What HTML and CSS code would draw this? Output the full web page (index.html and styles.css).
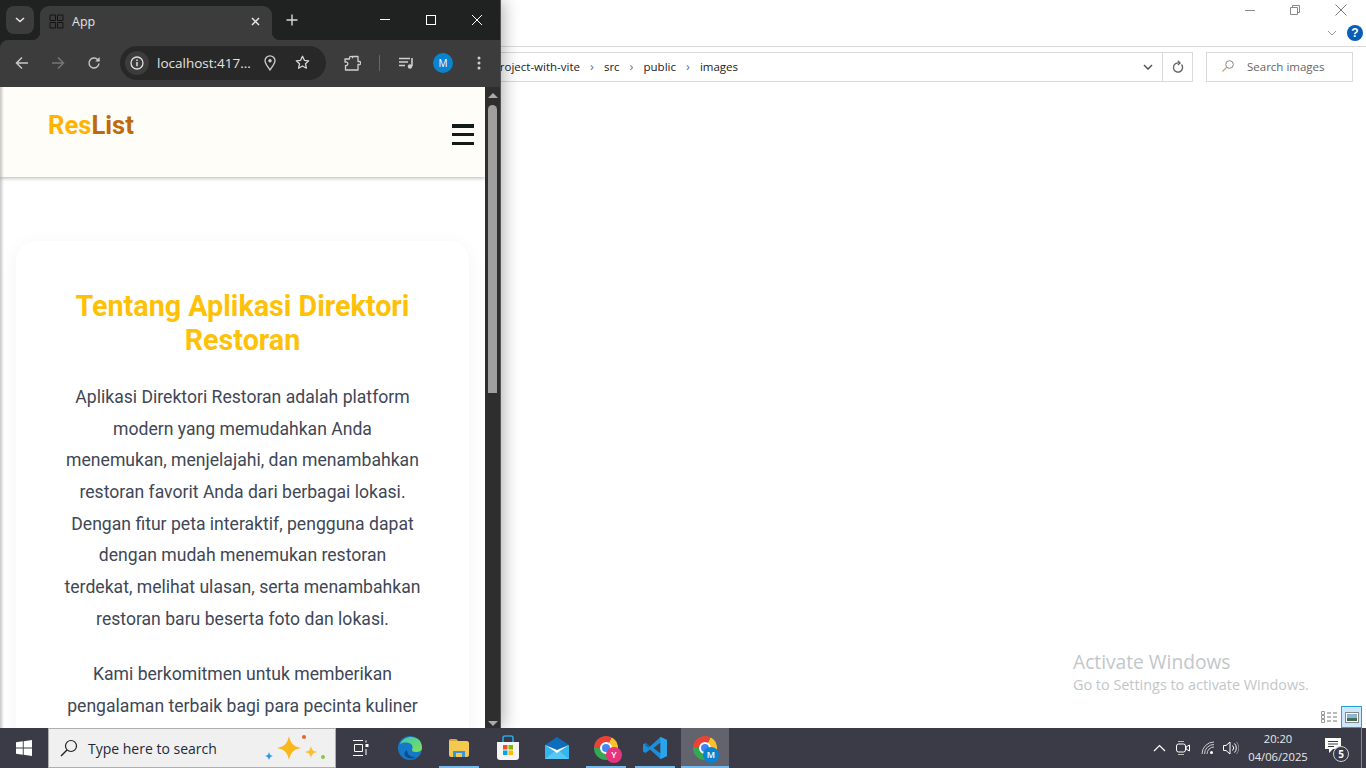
FILE: index.html
```html
<!DOCTYPE html>
<html lang="id">
<head>
    <meta charset="UTF-8">
    <title>App</title>
    <link rel="stylesheet" href="styles.css">
</head>
<body>
<div class="desktop">
    <!-- file explorer behind the browser -->
    <div class="explorer">
        <div class="ex-top">
            <div class="ex-controls">
                <svg width="12" height="12" viewBox="0 0 12 12"><path d="M1 6.500h10" stroke="#8a8a8a" fill="none"/></svg>
                <svg width="12" height="12" viewBox="0 0 12 12"><path d="M1.500 3.500h7v7h-7zM3.500 3.500v-2h7v7h-2" stroke="#8a8a8a" fill="none"/></svg>
                <svg width="14" height="14" viewBox="0 0 14 14"><path d="M1.500 1.500l11 11M12.500 1.500l-11 11" stroke="#7a7a7a" fill="none"/></svg>
            </div>
            <div class="ex-ribbon">
                <svg width="10" height="6" viewBox="0 0 10 6"><path d="M1 1l4 4 4-4" stroke="#999" fill="none"/></svg>
                <span class="help">?</span>
            </div>
        </div>
        <div class="ex-bar">
            <div class="address">
                <div class="crumbs">
                    <span>project-with-vite</span><i>›</i><span>src</span><i>›</i><span>public</span><i>›</i><span>images</span>
                </div>
                <div class="addr-drop"><svg width="10" height="6" viewBox="0 0 10 6"><path d="M1 1l4 4 4-4" stroke="#555" stroke-width="1.500" fill="none"/></svg></div>
                <div class="addr-refresh"><svg width="14" height="14" viewBox="0 0 14 14"><path d="M10.500 4.500a4.600 4.600 0 1 1-3.500-1.600H9" stroke="#666" stroke-width="1.400" fill="none"/><path d="M6.800 0.800l2.400 2.100-2.400 2.100" stroke="#666" stroke-width="1.200" fill="none"/></svg></div>
            </div>
            <div class="ex-search">
                <svg width="14" height="14" viewBox="0 0 14 14"><circle cx="8.500" cy="5.500" r="3.800" stroke="#888" fill="none"/><path d="M5.800 8.200L1.500 12.500" stroke="#c9a15c" stroke-width="1.200"/></svg>
                <span>Search images</span>
            </div>
        </div>
        <div class="ex-body">
            <div class="activate">
                <div class="activate-title">Activate Windows</div>
                <div class="activate-sub">Go to Settings to activate Windows.</div>
            </div>
            <div class="view-btns">
                <span class="view-btn">
                    <svg width="18" height="14" viewBox="0 0 18 14"><path d="M1.500 1.500h3v3h-3zM1.500 5.500h3v3h-3zM1.500 9.500h3v3h-3z" stroke="#999" fill="#fff"/><path d="M7 3h4M13 3h4M7 7h4M13 7h4M7 11h4M13 11h4" stroke="#777"/></svg>
                </span>
                <span class="view-btn view-on">
                    <svg width="14" height="11" viewBox="0 0 14 11"><rect x=".5" y=".5" width="13" height="10" fill="#fff" stroke="#888"/><rect x="2" y="2" width="10" height="7" fill="#8fb6d6"/><rect x="2" y="6" width="10" height="3" fill="#3f6f55"/></svg>
                </span>
            </div>
        </div>
    </div>

    <!-- browser window -->
    <div class="browser">
        <div class="tabstrip">
            <span class="tab-search"><svg width="10" height="6" viewBox="0 0 10 6"><path d="M1 1l4 3.500L9 1" stroke="#e3e3e3" stroke-width="1.600" fill="none"/></svg></span>
            <div class="tab">
                <svg width="15" height="15" viewBox="0 0 15 15"><path d="M1 1h5.500v5.500H1zM8.500 1H14v5.500H8.500zM1 8.500h5.500V14H1zM8.500 8.500H14V14H8.500z" stroke="#141414" fill="none" stroke-linejoin="round"/></svg>
                <span class="tab-title">App</span>
                <svg class="tab-close" width="9" height="9" viewBox="0 0 9 9"><path d="M1 1l7 7M8 1L1 8" stroke="#e6e6e6" stroke-width="1.500"/></svg>
            </div>
            <svg class="new-tab" width="12" height="12" viewBox="0 0 12 12"><path d="M6 .5v11M.5 6h11" stroke="#d8d8d8" stroke-width="1.400"/></svg>
            <div class="win-controls">
                <svg width="12" height="12" viewBox="0 0 12 12"><path d="M1 5.500h10" stroke="#fff" stroke-width="1"/></svg>
                <svg width="12" height="12" viewBox="0 0 12 12"><rect x="1.500" y="1.500" width="9" height="9" stroke="#fff" fill="none"/></svg>
                <svg width="12" height="12" viewBox="0 0 12 12"><path d="M1 1l10 10M11 1L1 11" stroke="#fff"/></svg>
            </div>
        </div>
        <div class="toolbar">
            <svg class="tb-back" width="14" height="14" viewBox="0 0 14 14"><path d="M13 7H2M7 1.500L1.500 7 7 12.500" stroke="#c8c8c8" stroke-width="1.500" fill="none"/></svg>
            <svg class="tb-forward" width="14" height="14" viewBox="0 0 14 14"><path d="M1 7h11M7 1.500L12.500 7 7 12.500" stroke="#767676" stroke-width="1.500" fill="none"/></svg>
            <svg class="tb-reload" width="14" height="14" viewBox="0 0 14 14"><path d="M12 7.500a5 5 0 1 1-1.400-4L12.300 5" stroke="#c8c8c8" stroke-width="1.400" fill="none"/><path d="M12.600 1v4.400H8.200" fill="#c8c8c8"/></svg>
            <div class="omnibox">
                <span class="site-info"><svg width="14" height="14" viewBox="0 0 14 14"><circle cx="7" cy="7" r="6" stroke="#ddd" stroke-width="1.300" fill="none"/><path d="M7 6v4.200M7 3.600v1.400" stroke="#ddd" stroke-width="1.500"/></svg></span>
                <span class="url">localhost:417...</span>
                <svg class="omni-pin" width="12" height="16" viewBox="0 0 12 16"><path d="M6 15C3.500 11 1 8.600 1 5.800a5 5 0 0 1 10 0C11 8.600 8.500 11 6 15z" stroke="#d0d0d0" stroke-width="1.300" fill="none"/><circle cx="6" cy="5.800" r="1.700" fill="#d0d0d0"/></svg>
                <svg class="omni-star" width="15" height="15" viewBox="0 0 15 15"><path d="M7.500 1.300l1.900 4 4.300.5-3.200 3 .9 4.400-3.900-2.200-3.900 2.200.9-4.400-3.200-3 4.300-.5z" stroke="#d8d8d8" stroke-width="1.300" fill="none" stroke-linejoin="round"/></svg>
            </div>
            <svg class="tb-ext" width="17" height="16" viewBox="0 0 17 16"><path d="M1 4h4.500V2.800a1.500 1.500 0 0 1 3 0V1.500H14v5h1.300a1.500 1.500 0 0 1 0 3H14V15H1.500v-4.500a1.500 1.500 0 0 0 1-3.500H1z" stroke="#cfcfcf" stroke-width="1.300" fill="none" stroke-linejoin="round"/></svg>
            <span class="tb-sep"></span>
            <svg class="tb-media" width="16" height="12" viewBox="0 0 16 12"><path d="M0 1.500h11M0 5h9M0 8.500h6" stroke="#cfcfcf" stroke-width="1.500"/><path d="M13 1v8" stroke="#cfcfcf" stroke-width="1.600"/><circle cx="11" cy="9.500" r="2.200" fill="#cfcfcf"/></svg>
            <span class="avatar">M</span>
            <svg class="tb-menu" width="4" height="14" viewBox="0 0 4 14"><circle cx="2" cy="2" r="1.500" fill="#cfcfcf"/><circle cx="2" cy="7" r="1.500" fill="#cfcfcf"/><circle cx="2" cy="12" r="1.500" fill="#cfcfcf"/></svg>
        </div>
        <div class="viewport">
            <div class="page">
                <header class="site-header">
                    <a class="logo"><span class="logo-res">Res</span><span class="logo-list">List</span></a>
                    <button class="burger"><span></span><span></span><span></span></button>
                </header>
                <main class="about">
                    <section class="about-card">
                        <h2>Tentang Aplikasi Direktori Restoran</h2>
                        <p>Aplikasi Direktori Restoran adalah platform modern yang memudahkan Anda menemukan, menjelajahi, dan menambahkan restoran favorit Anda dari berbagai lokasi. Dengan fitur peta interaktif, pengguna dapat dengan mudah menemukan restoran terdekat, melihat ulasan, serta menambahkan restoran baru beserta foto dan lokasi.</p>
                        <p>Kami berkomitmen untuk memberikan pengalaman terbaik bagi para pecinta kuliner</p>
                    </section>
                </main>
            </div>
            <div class="scrollbar">
                <span class="sb-up"></span>
                <span class="sb-thumb"></span>
                <span class="sb-down"></span>
            </div>
        </div>
    </div>

    <!-- windows taskbar -->
    <div class="taskbar">
        <div class="start">
            <svg width="16" height="16" viewBox="0 0 16 16"><path d="M0 2.300L6.800 1.300V7.500H0zM7.700 1.200L16 0V7.500H7.700zM0 8.400H6.800V14.700L0 13.700zM7.700 8.400H16V16L7.700 14.800z" fill="#fff"/></svg>
        </div>
        <div class="search">
            <svg width="18" height="18" viewBox="0 0 18 18"><circle cx="11" cy="7" r="5.500" stroke="#222" stroke-width="1.200" fill="none"/><path d="M7 11l-6 6" stroke="#222" stroke-width="1.400"/></svg>
            <span class="search-text">Type here to search</span>
            <svg class="sparkles" width="62" height="30" viewBox="0 0 62 30"><path d="M25 3c2 8 4 10 12 12-8 2-10 4-12 12-2-8-4-10-12-12 8-2 10-4 12-12z" fill="#fbb81d"/><path d="M47 13c1 4 2 5 6 6-4 1-5 2-6 6-1-4-2-5-6-6 4-1 5-2 6-6z" fill="#fbc02d"/><path d="M5 19c.8 3 1.500 3.500 4 4-2.500.8-3.200 1.500-4 4-.8-2.500-1.500-3.200-4-4 2.500-.5 3.200-1 4-4z" fill="#2e9be6"/><circle cx="40" cy="4" r="2" fill="#e8622c"/><circle cx="59" cy="24" r="2" fill="#8cc63f"/></svg>
        </div>
        <div class="task-item">
            <svg width="16" height="16" viewBox="0 0 16 16"><path d="M0 .5h10M0 15.500h10M1.500 4.500h8v7h-8z" stroke="#fff" fill="none"/><path d="M12.500 4h3v3h-3z" fill="#fff"/><path d="M13 .5v2M13 9v6" stroke="#fff"/></svg>
        </div>
        <div class="task-item">
            <svg width="24" height="24" viewBox="0 0 24 24"><defs><linearGradient id="edgeA" x1="0" y1="0" x2="1" y2="1"><stop offset="0" stop-color="#3bc9b0"/><stop offset="1" stop-color="#7fe05a"/></linearGradient></defs><circle cx="12" cy="12" r="12" fill="#1479c9"/><path d="M2 8C5 1 14-1 20 3c3 2 4 6 4 9 0 3-3 4-6 4-3 0-4-1-4-2 1-2 1-6-3-7-4-1-7 0-9 1z" fill="url(#edgeA)"/><path d="M9 14c0 4 3 7 7 7 1 0 2 0 3-1-3 3-8 3-11 1-2-2-2-5 1-7z" fill="#0c4d8a"/></svg>
        </div>
        <div class="task-item running">
            <svg width="22" height="20" viewBox="0 0 22 20"><path d="M1 3c0-1 1-2 2-2h5l2 2h9c1 0 2 1 2 2v12c0 1-1 2-2 2H3c-1 0-2-1-2-2z" fill="#f3c94f"/><path d="M1 3c0-1 1-2 2-2h5l2 2H1z" fill="#d9a92f"/><path d="M5 13h12v6H5z" fill="#3c93d6"/><path d="M8 15h6v4H8z" fill="#f3c94f"/></svg>
        </div>
        <div class="task-item">
            <svg width="24" height="26" viewBox="0 0 24 26"><path d="M7 7V3c0-1 1-2 2-2h6c1 0 2 1 2 2v4" stroke="#2aa7e0" stroke-width="1.600" fill="none"/><path d="M1 7h22v15c0 2-1 3-3 3H4c-2 0-3-1-3-3z" fill="#f4f4f4"/><path d="M7 10h4.500v4.500H7z" fill="#f25022"/><path d="M12.500 10H17v4.500h-4.500z" fill="#7fba00"/><path d="M7 15.500h4.500V20H7z" fill="#00a4ef"/><path d="M12.500 15.500H17V20h-4.500z" fill="#ffb900"/></svg>
        </div>
        <div class="task-item">
            <svg width="24" height="22" viewBox="0 0 24 22"><path d="M0 8L12 0l12 8v14H0z" fill="#0f6cbd"/><path d="M0 8l12 8 12-8v14H0z" fill="#33b5ee"/><path d="M0 22l10-8 2 1.500 2-1.500 10 8z" fill="#57c8f5"/><path d="M0 8l12 8 12-8-12 5z" fill="#fff"/></svg>
        </div>
        <div class="task-item running">
            <span class="chrome"><span class="chrome-dot"></span></span>
            <span class="badge badge-y">Y</span>
        </div>
        <div class="task-item running">
            <svg width="24" height="24" viewBox="0 0 24 24"><path d="M17.500 1L24 4v16l-6.500 3L7 13.500 2.500 17 0 15.500V8.500L2.500 7 7 10.500z" fill="#1c8fdc"/><path d="M17.500 6.500L10.500 12l7 5.500z" fill="#3b4048"/><path d="M17.500 1L24 4v16l-6.500 3z" fill="#2aa5ec"/><path d="M2.500 7l4.500 3.500-1.500 1.500-3-2.300z" fill="#0c6cb4"/></svg>
        </div>
        <div class="task-item running active">
            <span class="chrome"><span class="chrome-dot"></span></span>
            <span class="badge badge-m">M</span>
        </div>
        <div class="tray">
            <svg class="tray-up" width="13" height="8" viewBox="0 0 13 8"><path d="M1 7l5.500-5.500L12 7" stroke="#fff" stroke-width="1.200" fill="none"/></svg>
            <svg class="tray-meet" width="14" height="16" viewBox="0 0 14 16"><rect x=".5" y="4" width="9" height="8" rx="2" stroke="#fff" fill="none"/><path d="M10 7l3.500-2v6L10 9z" stroke="#fff" fill="none"/><path d="M2 1.500h6M2 14.500h6" stroke="#bbb"/></svg>
            <svg class="tray-net" width="14" height="14" viewBox="0 0 14 14"><path d="M1 13a12 12 0 0 1 12-12M3.500 13A9.500 9.500 0 0 1 13 3.500M6 13a7 7 0 0 1 7-7" stroke="#cfcfcf" fill="none"/><circle cx="10.500" cy="11.500" r="1.500" fill="#fff"/></svg>
            <svg class="tray-vol" width="16" height="14" viewBox="0 0 16 14"><path d="M.5 4.500H3L7 1v12L3 9.500H.5z" stroke="#fff" fill="none"/><path d="M9.500 4.500a3.500 3.500 0 0 1 0 5M11.500 2.500a6.500 6.500 0 0 1 0 9" stroke="#fff" fill="none"/><path d="M13.500 1a9 9 0 0 1 0 12" stroke="#888" fill="none"/></svg>
            <div class="clock"><span>20:20</span><span>04/06/2025</span></div>
            <div class="notify">
                <svg width="16" height="15" viewBox="0 0 16 15"><path d="M0 0h16v11H8l-4 4v-4H0z" fill="#fff"/><path d="M3 3.500h10M3 6h10M3 8.500h6" stroke="#3a3a45"/></svg>
                <span class="notify-count">5</span>
            </div>
        </div>
    </div>
</div>
</body>
</html>
```

FILE: styles.css
```css
* { box-sizing: border-box; }
html, body { margin: 0; padding: 0; height: 100%; overflow: hidden; }
body { font-family: "Open Sans", "Noto Sans", sans-serif; background: #fff; }
svg { display: block; flex: none; }

.desktop { position: relative; width: 1366px; height: 768px; display: flex; flex-direction: column; overflow: hidden; }

/* explorer */
.explorer { flex: 1; display: flex; flex-direction: column; background: #fff; min-height: 0; }
.ex-top { height: 47px; border-bottom: 1px solid #dadada; display: flex; flex-direction: column; }
.ex-controls { display: flex; justify-content: flex-end; align-items: center; gap: 33px; height: 20px; padding-right: 18px; }
.ex-ribbon { display: flex; justify-content: flex-end; align-items: center; gap: 10px; height: 26px; padding-right: 3px; }
.help { width: 16px; height: 16px; border-radius: 50%; background: #0a5db5; color: #fff; font: bold 12px/16px "Liberation Sans", sans-serif; text-align: center; }
.ex-bar { display: flex; align-items: stretch; height: 30px; margin-top: 5px; padding-right: 13px; }
.address { flex: 1; margin-right: 13px; border: 1px solid #d9d9d9; display: flex; align-items: stretch; }
.crumbs { flex: 1; display: flex; align-items: center; justify-content: flex-end; gap: 10px; padding: 0 396px 2px 0; font-size: 11.500px; color: #222; }
.crumbs i { font-style: normal; color: #777; font-size: 13px; }
.addr-drop { width: 28px; display: flex; align-items: center; justify-content: center; }
.addr-refresh { width: 30px; border-left: 1px solid #d9d9d9; display: flex; align-items: center; justify-content: center; }
.ex-search { width: 147px; border: 1px solid #d9d9d9; display: flex; align-items: center; gap: 12px; padding: 0 0 2px 14px; font-size: 11.500px; color: #666; }
.ex-body { flex: 1; position: relative; }
.activate { position: absolute; left: 1073px; top: 567px; color: #c2c6ca; }
.activate-title { font-size: 19.200px; line-height: 26px; }
.activate-sub { font-size: 14.400px; line-height: 20px; }
.view-btns { position: absolute; right: 4px; bottom: 0; display: flex; gap: 3px; }
.view-btn { width: 19px; height: 22px; display: flex; align-items: center; justify-content: center; }
.view-on { width: 21px; background: #cce8ff; border: 1px solid #26a0da; }

/* browser */
.browser { position: absolute; left: 0; top: 0; width: 501px; height: 728px; display: flex; flex-direction: column; border-right: 1px solid #555; box-shadow: 2px 0 16px rgba(0, 0, 0, .32); background: #202221; }
.tabstrip { height: 40px; background: #202221; display: flex; align-items: flex-start; padding: 6px 0 0 6px; position: relative; }
.tab-search { width: 28px; height: 28px; border-radius: 8px; background: #3c3c3c; display: flex; align-items: center; justify-content: center; }
.tab { width: 232px; height: 34px; margin-left: 6px; background: #3c3c3c; border-radius: 9px 9px 0 0; display: flex; align-items: center; padding: 0 12px 4px 9px; color: #e3e3e3; font-size: 12.500px; position: relative; }
.tab::before, .tab::after { content: ""; position: absolute; bottom: 0; width: 8px; height: 8px; }
.tab::before { left: -8px; background: radial-gradient(circle at 0 0, transparent 8px, #3c3c3c 8.500px); }
.tab::after { right: -8px; background: radial-gradient(circle at 100% 0, transparent 8px, #3c3c3c 8.500px); }
.tab-title { flex: 1; margin-left: 8px; }
.new-tab { margin: 8px 0 0 14px; }
.win-controls { margin-left: auto; display: flex; gap: 34px; padding: 8px 17px 0 0; }
.toolbar { height: 47px; background: #3c3c3c; border-radius: 8px 0 0 0; display: flex; align-items: center; padding: 0 0 2px 15px; }
.tb-forward { margin-left: 22px; }
.tb-reload { margin-left: 22px; }
.omnibox { width: 206px; height: 34px; margin-left: 19px; border-radius: 17px; background: #282828; display: flex; align-items: center; padding-left: 5px; }
.site-info { width: 24px; height: 24px; border-radius: 50%; background: #3c3c3c; display: flex; align-items: center; justify-content: center; }
.url { width: 104px; margin-left: 8px; font-size: 13.500px; color: #e3e3e3; white-space: nowrap; }
.omni-pin { margin-left: 3px; }
.omni-star { margin-left: 19px; }
.tb-ext { margin-left: 18px; }
.tb-sep { width: 1px; height: 16px; background: #666; margin-left: 18px; }
.tb-media { margin-left: 19px; }
.avatar { width: 20px; height: 20px; margin-left: 18px; border-radius: 50%; background: #0a84d0; color: #fff; font-size: 10px; line-height: 20px; text-align: center; }
.tb-menu { margin-left: 24px; }

.viewport { flex: 1; display: flex; min-height: 0; position: relative; background: #fff; }
.viewport::after { content: ""; position: absolute; left: 0; top: 0; bottom: 0; width: 4px; background: linear-gradient(to right, rgba(0, 0, 0, .22), rgba(0, 0, 0, 0)); }
.page { width: 485px; overflow: hidden; font-family: Roboto, sans-serif; }
.site-header { height: 90px; background: #fffdf8; box-shadow: 0 1px 4px rgba(0, 0, 0, .3); display: flex; justify-content: space-between; padding: 21px 11px 0 48px; position: relative; }
.logo { font-size: 25.600px; line-height: 34px; font-weight: 700; }
.logo-res { color: #ffb300; }
.logo-list { color: #bf6a0a; }
.burger { width: 22px; height: 21px; margin-top: 16px; padding: 0; border: 0; background: none; display: flex; flex-direction: column; justify-content: space-between; }
.burger span { display: block; height: 3.500px; background: #131b18; }
.about { padding: 64px 16px 0; }
.about-card { background: #fff; border-radius: 20px; padding: 48px; box-shadow: 0 4px 20px rgba(0, 0, 0, .05); text-align: center; }
.about-card h2 { margin: 0 0 25px; font-size: 28.700px; line-height: 34px; font-weight: 700; color: #ffc107; }
.about-card p { margin: 0 0 24px; font-size: 17.600px; line-height: 1.800; color: #404756; }

.scrollbar { width: 15px; background: #2e2e2e; display: flex; flex-direction: column; align-items: center; position: relative; }
.sb-up { width: 0; height: 0; margin-top: 6px; border: 5px solid transparent; border-top: 0; border-bottom: 5px solid #aaa; }
.sb-thumb { width: 9px; height: 288px; margin-top: 7px; border-radius: 5px 5px 0 0; background: #9f9f9f; }
.sb-down { width: 0; height: 0; margin-top: auto; margin-bottom: 2px; border: 5px solid transparent; border-bottom: 0; border-top: 5px solid #aaa; }

/* taskbar */
.taskbar { height: 40px; flex: none; background: #3a3b47; display: flex; align-items: stretch; position: relative; }
.start { width: 48px; display: flex; align-items: center; justify-content: center; }
.search { width: 288px; background: #f0f0f0; border: 1px solid #aeaeae; display: flex; align-items: center; padding-left: 11px; color: #1c2a3a; }
.search-text { margin-left: 10px; font-size: 14px; white-space: nowrap; }
.sparkles { margin-left: auto; margin-right: 9px; }
.task-item { width: 49px; position: relative; display: flex; align-items: center; justify-content: center; }
.task-item.running::after { content: ""; position: absolute; left: 5px; right: 4px; bottom: 0; height: 2px; background: #76b9ed; }
.task-item.active { width: 48px; margin-left: 2px; background: #62636c; }
.task-item.active::after { left: 0; right: 0; }
.chrome { width: 24px; height: 24px; border-radius: 50%; background: conic-gradient(#ea4335 0 30deg, #fbc02d 30deg 150deg, #34a853 150deg 270deg, #ea4335 270deg); display: flex; align-items: center; justify-content: center; }
.chrome-dot { width: 12px; height: 12px; border-radius: 50%; background: #4285f4; border: 2px solid #fff; }
.badge { position: absolute; left: 25px; top: 19px; width: 16px; height: 16px; border-radius: 50%; color: #fff; font-size: 9px; line-height: 16px; text-align: center; font-weight: 600; }
.badge-y { background: #e8347e; }
.badge-m { left: 22px; background: #0a84d0; }
.tray { margin-left: auto; margin-right: 4px; width: 209px; border-right: 1px solid #85868e; display: flex; align-items: center; color: #fff; position: relative; }
.tray-meet { margin-left: 10px; }
.tray-net { margin-left: 11px; }
.tray-vol { margin-left: 8px; }
.clock { width: 78px; display: flex; flex-direction: column; align-items: center; font-size: 11.200px; line-height: 18px; color: #e8e8e8; }
.notify { margin-left: 8px; position: relative; margin-top: -6px; }
.notify-count { position: absolute; left: 8px; top: 8px; width: 16px; height: 16px; border-radius: 50%; background: #3a3b47; border: 1px solid #cfcfcf; font-size: 10px; line-height: 14px; text-align: center; font-weight: 700; }
```
